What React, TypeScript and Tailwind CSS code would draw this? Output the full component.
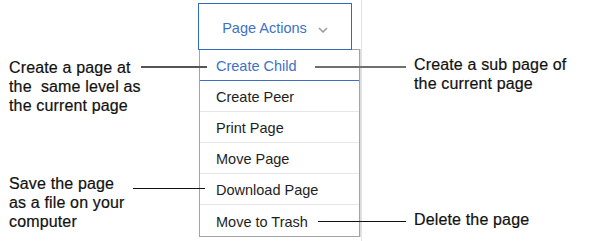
import React from "react";

const items = ["Create Child", "Create Peer", "Print Page", "Move Page", "Download Page", "Move to Trash"];

const Note = ({ lines, className }: { lines: string[]; className?: string }) => (
    <div className={`text-[16px] leading-[19px] tracking-[0.15px] text-[#111] [-webkit-text-stroke:0.2px_#111] ${className ?? ""}`}>
        {lines.map((l) => (
            <div key={l} className="whitespace-pre">{l}</div>
        ))}
    </div>
);

export default function App() {
    return (
        <div className="relative w-[590px] h-[241px] bg-white overflow-hidden font-['Liberation_Sans',Arial,sans-serif]">
            {/* page edge behind the menu */}
            <div className="absolute left-[361px] top-0 h-full w-px bg-[#e3e3e3]" />

            <div className="relative flex">
                {/* left notes */}
                <div className="flex w-[198px] flex-col gap-[59px] pl-[9px] pt-[58px]">
                    <Note lines={["Create a page at", "the  same level as", "the current page"]} />
                    <Note lines={["Save the page", "as a file on your", "computer"]} />
                </div>

                {/* menu */}
                <div className="pt-[3px]">
                    <button className="relative z-10 flex h-[47px] w-[154px] items-center justify-center gap-[11px] border border-[#2f6cc0] bg-white pt-[4px] text-[14.5px] text-[#3d72c6]">
                        Page Actions
                        <svg width="10" height="6" viewBox="0 0 10 6" className="mt-[2px]">
                            <polyline points="1,1 5,5 9,1" fill="none" stroke="#9a9a9a" strokeWidth="1.5" />
                        </svg>
                    </button>
                    <div className="ml-px -mt-px w-[161px] border border-[#a3a3a3] bg-white shadow-[1px_0_0_#dcdcdc]">
                        {items.map((item, i) => (
                            <div
                                key={item}
                                className={`flex h-[31px] items-center pl-[16px] pt-[4px] text-[14.5px] ${
                                    i === 0
                                        ? "border-b border-[#3a6fc2] text-[#3d72c6]"
                                        : i < items.length - 1
                                        ? "border-b border-[#e6e6e6] text-[#1e1e1e]"
                                        : "text-[#1e1e1e]"
                                }`}
                            >
                                {item}
                            </div>
                        ))}
                    </div>
                </div>

                {/* right notes */}
                <div className="flex flex-col gap-[117px] pl-[54px] pt-[55px]">
                    <Note lines={["Create a sub page of", "the current page"]} />
                    <Note lines={["Delete the page"]} />
                </div>
            </div>

            {/* leader lines over the menu */}
            <div className="absolute left-[141px] top-[66px] h-[2px] w-[66px] bg-[#555]" />
            <div className="absolute left-[315px] top-[66px] h-[2px] w-[91px] bg-[#707070]" />
            <div className="absolute left-[133px] top-[188px] h-px w-[72px] bg-[#111]" />
            <div className="absolute left-[318px] top-[221px] h-px w-[88px] bg-[#111]" />
        </div>
    );
}
